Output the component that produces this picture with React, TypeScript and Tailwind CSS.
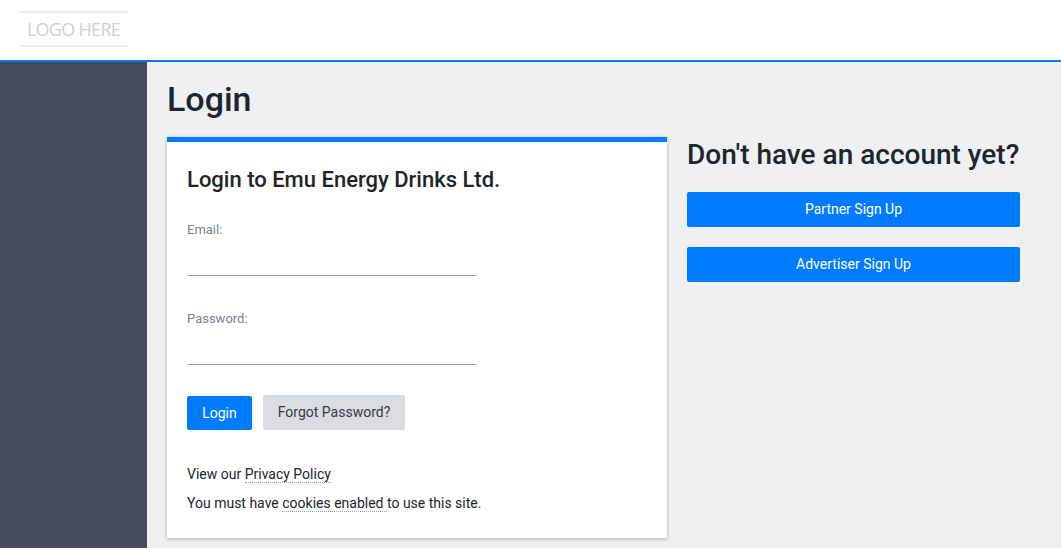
import React from 'react';

const Logo = () => (
  <div className="w-[109px] h-[36px] border-y-2 border-[#eeeeee] flex items-center justify-center font-['Open_Sans',sans-serif] text-[18px] tracking-[-0.7px] text-[#d0d0d0]">
    LOGO HERE
  </div>
);

const Field: React.FC<{ label: string; type: string }> = ({ label, type }) => (
  <div>
    <label className="block text-[13px] leading-[20px] text-[#7a8290]">{label}</label>
    <input
      type={type}
      className="block w-[290px] h-[35px] border-b border-[#9aa3b0] bg-transparent outline-none mt-[1px]"
    />
  </div>
);

export default function App() {
  return (
    <div className="h-[548px] overflow-hidden flex flex-col bg-[#eef0f2] font-['Roboto',sans-serif] text-[#212529]">
      <header className="h-[62px] shrink-0 bg-white border-b-2 border-[#007bff] pl-[19px] pt-[11px]">
        <Logo />
      </header>

      <div className="flex flex-1 min-h-0">
        <aside className="w-[147px] shrink-0 bg-[#434d5d]" />

        <main className="flex-1 pl-[20px]">
          <h1 className="text-[34px] leading-[38px] font-medium mt-[18px] mb-[19px]">Login</h1>

          <div className="flex items-start gap-[20px]">
            <section className="w-[500px] h-[401px] bg-white border-t-[5px] border-[#007bff] shadow-[0_1px_4px_rgba(0,0,0,0.28)] px-[20px] pt-[24px]">
              <h2 className="text-[22px] leading-[28px] font-medium mb-[26px]">Login to Emu Energy Drinks Ltd.</h2>

              <div className="flex flex-col gap-[33px]">
                <Field label="Email:" type="email" />
                <Field label="Password:" type="password" />
              </div>

              <div className="flex items-end gap-[11px] mt-[30px]">
                <button className="w-[65px] h-[34px] bg-[#007bff] text-white text-[14px] rounded-[2px]">Login</button>
                <button className="w-[142px] h-[35px] bg-[#d9dde1] text-[#343a40] text-[14px] rounded-[2px]">Forgot Password?</button>
              </div>

              <p className="text-[14px] leading-[20px] mt-[34px]">
                View our <a className="border-b border-dotted border-[#9aa0a8]">Privacy Policy</a>
              </p>
              <p className="text-[14px] leading-[20px] mt-[9px]">
                You must have <a className="border-b border-dotted border-[#9aa0a8]">cookies enabled </a>to use this site.
              </p>
            </section>

            <section className="w-[333px]">
              <h2 className="text-[28px] leading-[36px] font-medium mb-[19px]">Don't have an account yet?</h2>
              <button className="block w-full h-[35px] bg-[#007bff] text-white text-[14px] rounded-[2px] mb-[20px]">Partner Sign Up</button>
              <button className="block w-full h-[35px] bg-[#007bff] text-white text-[14px] rounded-[2px]">Advertiser Sign Up</button>
            </section>
          </div>
        </main>
      </div>
    </div>
  );
}
